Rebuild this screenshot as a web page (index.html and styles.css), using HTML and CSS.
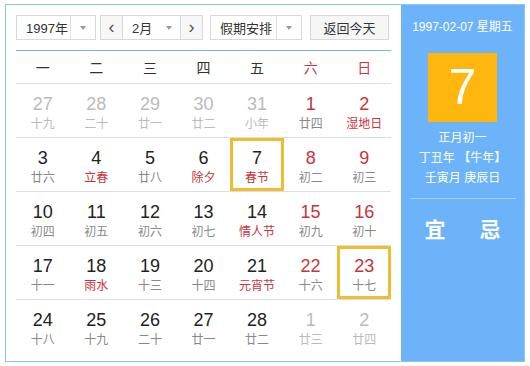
FILE: index.html
```html
<!DOCTYPE html>
<html lang="zh-CN">
<head>
    <meta charset="UTF-8">
    <title>万年历</title>
    <link rel="stylesheet" href="styles.css">
</head>
<body>
    <div class="calendar">
        <div class="main">
            <div class="controls">
                <div class="select year">
                    <span class="value">1997年</span>
                    <span class="arrow"></span>
                </div>
                <div class="month-group">
                    <span class="nav">&lsaquo;</span>
                    <div class="select month">
                        <span class="value">2月</span>
                        <span class="arrow"></span>
                    </div>
                    <span class="nav">&rsaquo;</span>
                </div>
                <div class="select holiday">
                    <span class="value">假期安排</span>
                    <span class="arrow"></span>
                </div>
                <button class="btn">返回今天</button>
            </div>

            <div class="weekdays">
                <span>一</span><span>二</span><span>三</span><span>四</span><span>五</span>
                <span class="red">六</span><span class="red">日</span>
            </div>

            <div class="days">
                <div class="week">
                    <div class="day other"><b>27</b><i>十九</i></div>
                    <div class="day other"><b>28</b><i>二十</i></div>
                    <div class="day other"><b>29</b><i>廿一</i></div>
                    <div class="day other"><b>30</b><i>廿二</i></div>
                    <div class="day other"><b>31</b><i>小年</i></div>
                    <div class="day weekend"><b>1</b><i>廿四</i></div>
                    <div class="day weekend"><b>2</b><i class="fest">湿地日</i></div>
                </div>
                <div class="week">
                    <div class="day"><b>3</b><i>廿六</i></div>
                    <div class="day"><b>4</b><i class="fest">立春</i></div>
                    <div class="day"><b>5</b><i>廿八</i></div>
                    <div class="day"><b>6</b><i class="fest">除夕</i></div>
                    <div class="day selected"><b>7</b><i class="fest">春节</i></div>
                    <div class="day weekend"><b>8</b><i>初二</i></div>
                    <div class="day weekend"><b>9</b><i>初三</i></div>
                </div>
                <div class="week">
                    <div class="day"><b>10</b><i>初四</i></div>
                    <div class="day"><b>11</b><i>初五</i></div>
                    <div class="day"><b>12</b><i>初六</i></div>
                    <div class="day"><b>13</b><i>初七</i></div>
                    <div class="day"><b>14</b><i class="fest">情人节</i></div>
                    <div class="day weekend"><b>15</b><i>初九</i></div>
                    <div class="day weekend"><b>16</b><i>初十</i></div>
                </div>
                <div class="week">
                    <div class="day"><b>17</b><i>十一</i></div>
                    <div class="day"><b>18</b><i class="fest">雨水</i></div>
                    <div class="day"><b>19</b><i>十三</i></div>
                    <div class="day"><b>20</b><i>十四</i></div>
                    <div class="day"><b>21</b><i class="fest">元宵节</i></div>
                    <div class="day weekend"><b>22</b><i>十六</i></div>
                    <div class="day weekend selected"><b>23</b><i>十七</i></div>
                </div>
                <div class="week">
                    <div class="day"><b>24</b><i>十八</i></div>
                    <div class="day"><b>25</b><i>十九</i></div>
                    <div class="day"><b>26</b><i>二十</i></div>
                    <div class="day"><b>27</b><i>廿一</i></div>
                    <div class="day"><b>28</b><i>廿二</i></div>
                    <div class="day other"><b>1</b><i>廿三</i></div>
                    <div class="day other"><b>2</b><i>廿四</i></div>
                </div>
            </div>
        </div>

        <div class="side">
            <div class="side-date">1997-02-07 星期五</div>
            <div class="big-day">7</div>
            <div class="lunar">
                <p>正月初一</p>
                <p>丁丑年 【牛年】</p>
                <p>壬寅月 庚辰日</p>
            </div>
            <div class="yiji">
                <span>宜</span><span>忌</span>
            </div>
        </div>
    </div>
</body>
</html>
```

FILE: styles.css
```css
body {
    margin: 0;
    background: #fff;
    font-family: "Liberation Sans", "Noto Sans CJK SC", sans-serif;
    color: #333;
}

.calendar {
    display: flex;
    width: 520px;
    height: 358px;
    margin: 4px 0 0 5px;
    border: 1px solid #8cc4f2;
    box-sizing: border-box;
    background: #fff;
}

.main {
    width: 395px;
    padding: 10px 10px 0 10px;
    box-sizing: border-box;
}

.controls {
    display: flex;
    height: 25px;
}

.select {
    display: flex;
    height: 25px;
    border: 1px solid #d8d8d8;
    box-sizing: border-box;
    font-size: 13px;
    color: #333;
}

.select .value {
    flex: 1;
    display: flex;
    align-items: center;
    padding-left: 9px;
}

.select .arrow {
    width: 24px;
    border-left: 1px solid #e0e0e0;
    display: flex;
    align-items: center;
    justify-content: center;
}

.select .arrow::after {
    content: "";
    border-left: 3px solid transparent;
    border-right: 3px solid transparent;
    border-top: 4px solid #999;
}

.year {
    width: 80px;
}

.month-group {
    display: flex;
    width: 103px;
    margin-left: 4px;
    height: 25px;
    border: 1px solid #d8d8d8;
    box-sizing: border-box;
}

.month-group .nav {
    width: 21px;
    display: flex;
    align-items: center;
    justify-content: center;
    font-size: 18px;
    color: #555;
    background: #f7f7f7;
}

.month-group .select.month {
    flex: 1;
    border-top: none;
    border-bottom: none;
    height: 23px;
}

.month .arrow {
    border-left: none;
    width: 22px;
}

.holiday {
    width: 92px;
    margin-left: 7px;
}

.btn {
    width: 79px;
    height: 25px;
    margin-left: 8px;
    border: 1px solid #d8d8d8;
    background: #f6f6f6;
    font-family: inherit;
    font-size: 13px;
    color: #333;
    padding: 0;
}

.weekdays {
    display: grid;
    grid-template-columns: repeat(7, 1fr);
    margin-top: 10px;
    height: 32px;
    border-top: 1px solid #74b4f0;
    border-bottom: 1px solid #ddd;
    font-size: 14px;
    align-items: center;
    text-align: center;
}

.red {
    color: #d0373f;
}

.week {
    display: grid;
    grid-template-columns: repeat(7, 1fr);
    border-bottom: 1px solid #ddd;
}

.week:last-child {
    border-bottom: none;
}

.day {
    height: 53px;
    display: flex;
    flex-direction: column;
    align-items: center;
    padding-top: 10px;
    box-sizing: border-box;
}

.day b {
    font-weight: normal;
    font-size: 18px;
    line-height: 20px;
    color: #222;
}

.day i {
    font-style: normal;
    font-size: 12px;
    line-height: 16px;
    margin-top: 2px;
    color: #888;
}

.day i.fest {
    color: #c9343c;
}

.day.weekend b {
    color: #c9343c;
}

.day.other b,
.day.other i {
    color: #bbb;
}

.day.selected {
    box-shadow: inset 0 0 0 3px #f0bc34;
}

.side {
    flex: 1;
    background: #6cb3fa;
    color: #fff;
    display: flex;
    flex-direction: column;
    align-items: center;
}

.side-date {
    font-size: 12px;
    margin-top: 14px;
    line-height: 16px;
}

.big-day {
    width: 69px;
    height: 69px;
    margin-top: 18px;
    background: #ffb60f;
    font-size: 50px;
    line-height: 69px;
    text-align: center;
}

.lunar {
    margin-top: 6px;
    text-align: center;
    font-size: 12px;
    line-height: 20px;
    width: 106px;
    padding-bottom: 10px;
    border-bottom: 1px solid #a6d1fb;
}

.lunar p {
    margin: 0;
}

.yiji {
    display: flex;
    gap: 34px;
    margin-top: 14px;
    font-size: 21px;
    font-weight: bold;
}
```
